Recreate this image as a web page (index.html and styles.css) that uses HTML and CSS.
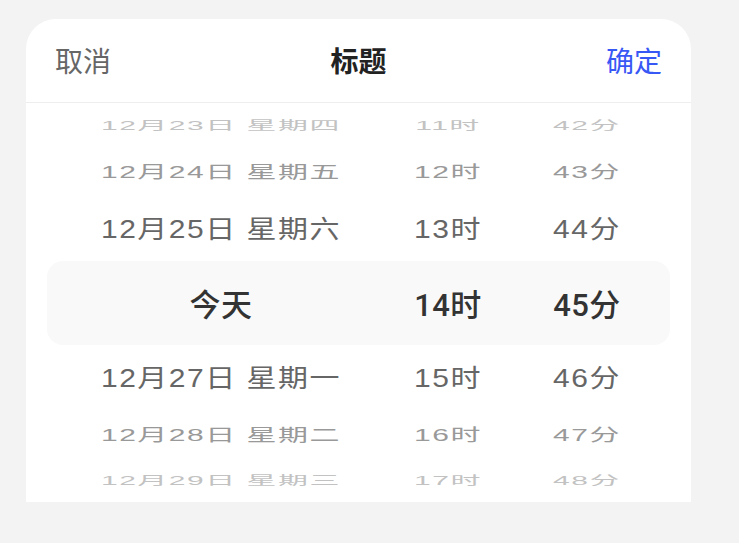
FILE: index.html
```html
<!DOCTYPE html>
<html lang="zh-CN">
<head>
<meta charset="utf-8">
<title>标题</title>
<link rel="stylesheet" href="styles.css">
</head>
<body>
<div class="sheet">
  <div class="header">
    <span class="btn cancel">取消</span>
    <span class="title">标题</span>
    <span class="btn confirm">确定</span>
  </div>
  <div class="wheel">
    <div class="row r1"><span class="cell"><span class="t">12月23日 星期四</span></span><span class="cell"><span class="t">11时</span></span><span class="cell"><span class="t">42分</span></span></div>
    <div class="row r2"><span class="cell"><span class="t">12月24日 星期五</span></span><span class="cell"><span class="t">12时</span></span><span class="cell"><span class="t">43分</span></span></div>
    <div class="row r3"><span class="cell"><span class="t">12月25日 星期六</span></span><span class="cell"><span class="t">13时</span></span><span class="cell"><span class="t">44分</span></span></div>
    <div class="row sel"><span class="cell"><span class="t">今天</span></span><span class="cell"><span class="t">14时</span></span><span class="cell"><span class="t">45分</span></span></div>
    <div class="row r5"><span class="cell"><span class="t">12月27日 星期一</span></span><span class="cell"><span class="t">15时</span></span><span class="cell"><span class="t">46分</span></span></div>
    <div class="row r6"><span class="cell"><span class="t">12月28日 星期二</span></span><span class="cell"><span class="t">16时</span></span><span class="cell"><span class="t">47分</span></span></div>
    <div class="row r7"><span class="cell"><span class="t">12月29日 星期三</span></span><span class="cell"><span class="t">17时</span></span><span class="cell"><span class="t">48分</span></span></div>
  </div>
</div>
</body>
</html>
```

FILE: styles.css
```css
html, body {
  margin: 0;
  padding: 0;
  background: #f3f3f3;
}
body {
  font-family: "Liberation Sans", "Noto Sans CJK SC", sans-serif;
  padding: 19px 0 0 26px;
}
.sheet {
  width: 665px;
  height: 483px;
  background: #fff;
  border-radius: 30px 30px 0 0;
  overflow: hidden;
}
.header {
  height: 84px;
  box-sizing: border-box;
  border-bottom: 1px solid #eeeeee;
  display: flex;
  align-items: center;
  justify-content: space-between;
  padding: 0 29px 2px 29px;
  font-family: "Noto Sans CJK SC", sans-serif;
  font-size: 28px;
}
.cancel { color: #666; }
.title { color: #222; font-weight: 700; }
.confirm { color: #3858f5; }
.wheel {
  display: flex;
  flex-direction: column;
}
.row {
  display: grid;
  grid-template-columns: 290px 164px 114px;
  padding: 0 47px 0 50px;
  align-items: center;
  font-size: 30px;
  letter-spacing: 1.5px;
}
.cell {
  display: flex;
  justify-content: center;
  white-space: nowrap;
}
.t { display: inline-block; line-height: 1; margin-top: 4px; }
.r1 { height: 42px; color: #c2c2c2; }
.r2 { height: 50px; color: #999; }
.r3 { height: 66px; color: #666; }
.sel {
  height: 84px;
  margin: 0 21px;
  padding: 0 26px 0 29px;
  background: #f9f9f9;
  border-radius: 16px;
  color: #333;
  font-family: Roboto, "Noto Sans CJK SC", sans-serif;
  font-weight: 500;
  font-size: 31px;
  letter-spacing: 0.5px;
}
.r5 { height: 64px; color: #666; }
.r6 { height: 48px; color: #999; }
.r7 { height: 44px; color: #c2c2c2; }
.r1 .t, .r7 .t { transform: scaleY(0.4); }
.r2 .t, .r6 .t { transform: scaleY(0.58); }
.r3 .t, .r5 .t { transform: scaleY(0.84); }
```
